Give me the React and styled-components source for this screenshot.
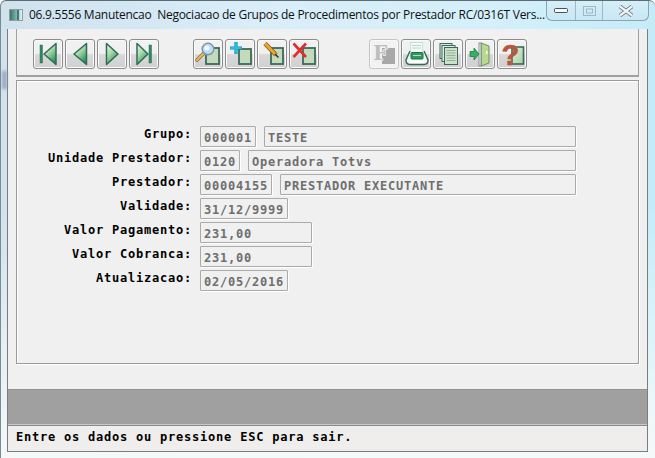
import React from 'react'
import styled, { createGlobalStyle } from 'styled-components'

const fields = [
  { label: 'Grupo:', values: [{ text: '000001', width: 56 }, { text: 'TESTE', width: 312 }] },
  { label: 'Unidade Prestador:', values: [{ text: '0120', width: 40 }, { text: 'Operadora Totvs', width: 328 }] },
  { label: 'Prestador:', values: [{ text: '00004155', width: 72 }, { text: 'PRESTADOR EXECUTANTE', width: 296 }] },
  { label: 'Validade:', values: [{ text: '31/12/9999', width: 88 }] },
  { label: 'Valor Pagamento:', values: [{ text: '231,00', width: 112 }] },
  { label: 'Valor Cobranca:', values: [{ text: '231,00', width: 112 }] },
  { label: 'Atualizacao:', values: [{ text: '02/05/2016', width: 88 }] },
]

function Sheet({ x = 13, y = 9, w = 13, h = 16 }) {
  return <rect x={x} y={y} width={w} height={h} fill="#c4dbbb" stroke="#3b6a58" strokeWidth="1.8" />
}

function Icon({ children }) {
  return (
    <svg width="28" height="28" viewBox="1 1 28 28" style={{ display: 'block', overflow: 'visible' }}>
      {children}
    </svg>
  )
}

const tri = { fill: 'url(#navGrad)', stroke: '#2f6b56', strokeWidth: 1.5, strokeLinejoin: 'round' }

const icons = {
  first: (
    <>
      <rect x="7" y="6" width="2.5" height="18" fill="#2f8a5f" stroke="#2f6b56" strokeWidth="0.5" />
      <path d="M11 15 L23 4.5 L23 25.5 Z" {...tri} />
    </>
  ),
  prev: <path d="M9 15 L21.5 4.5 L21.5 25.5 Z" {...tri} />,
  next: <path d="M21 15 L9.5 4.5 L9.5 25.5 Z" {...tri} />,
  last: (
    <>
      <path d="M19 15 L8 4.5 L8 25.5 Z" {...tri} />
      <rect x="20" y="6" width="2.5" height="18" fill="#2f8a5f" stroke="#2f6b56" strokeWidth="0.5" />
    </>
  ),
  search: (
    <>
      <Sheet x={13} y={9} w={13} h={16} />
      <path d="M10.5 14.5 L4 21" stroke="#8a6a3a" strokeWidth="3.6" strokeLinecap="round" />
      <path d="M10.5 14.5 L4 21" stroke="#f0b860" strokeWidth="2" strokeLinecap="round" />
      <circle cx="15" cy="10" r="5.8" fill="#bcdcf4" stroke="#7c93a8" strokeWidth="1.4" />
      <circle cx="14" cy="9" r="2.6" fill="#eef8ff" />
    </>
  ),
  add: (
    <>
      <Sheet x={14} y={10} w={12} h={15} />
      <path d="M11 3 V15 M5 9 H17" stroke="#1590b0" strokeWidth="3.2" />
      <path d="M11 3.5 V14.5 M5.5 9 H16.5" stroke="#20c0e8" strokeWidth="1.8" />
    </>
  ),
  edit: (
    <>
      <Sheet x={14} y={9} w={12} h={16} />
      <path d="M8 4.5 L19 16" stroke="#7a5a20" strokeWidth="4.4" />
      <path d="M8 4.5 L19 16" stroke="#f0a828" strokeWidth="2.8" />
      <path d="M18 15 L21.5 18.5" stroke="#333" strokeWidth="1.6" />
    </>
  ),
  remove: (
    <>
      <Sheet x={14} y={9} w={12} h={16} />
      <path d="M4.5 4.5 L17 18 M17 4.5 L4.5 18" stroke="#e02c2c" strokeWidth="2.6" />
    </>
  ),
  filter: (
    <>
      <rect x="13" y="9" width="13" height="16" fill="#a8a8a8" />
      <text
        x="4.5"
        y="21"
        fontFamily="'Liberation Serif', serif"
        fontWeight="700"
        fontSize="24"
        fill="#bdbdbd"
        stroke="#f2f2f2"
        strokeWidth="1.5"
        paintOrder="stroke"
      >
        F
      </text>
    </>
  ),
  print: (
    <>
      <rect x="9.5" y="3.5" width="12" height="11" fill="#f4fbf6" stroke="#bfe4d8" />
      <path d="M11 6.5 H20 M11 9 H20" stroke="#b6d8cc" />
      <path d="M9 12 L5 21 Q5 25.5 9 25.5 H23 Q27 25.5 27 21 L23 12" fill="#f2f6f2" stroke="#2f6b56" strokeWidth="1.4" />
      <rect x="10" y="13.5" width="12" height="6.5" rx="1" fill="#2f9a5e" stroke="#1f6f48" />
      <path d="M12 16.5 H20" stroke="#a8e0c0" />
      <rect x="9" y="21.5" width="14" height="2.5" fill="#fff" />
    </>
  ),
  pages: (
    <>
      <rect x="7" y="4.5" width="12" height="15" fill="#dfe6df" stroke="#3b6a58" />
      <rect x="9" y="6.5" width="13" height="16" fill="#e4ece2" stroke="#3b6a58" />
      <rect x="11.5" y="8.5" width="13" height="17" fill="#cfe0c8" stroke="#3b6a58" />
      <path d="M13.5 11.5 H22.5 M13.5 14 H22.5 M13.5 16.5 H22.5 M13.5 19 H22.5 M13.5 21.5 H22.5" stroke="#8fb39a" />
    </>
  ),
  exit: (
    <>
      <path d="M16 4 L24 7 V24 L16 27 Z" fill="#b9d98c" stroke="#6f8f6a" />
      <rect x="21" y="12" width="1.5" height="3" fill="#fff" />
      <rect x="14" y="4" width="2" height="23" fill="#eef2f4" stroke="#5f6f78" strokeWidth="0.7" />
      <path d="M5 12.5 H9 V9 L14 15 L9 21 V17.5 H5 Z" fill="#34b060" stroke="#1f7a48" strokeWidth="0.8" />
    </>
  ),
  help: (
    <>
      <rect x="15" y="8" width="11.5" height="17" fill="url(#helpGrad)" stroke="#3b6a58" strokeWidth="1.6" />
      <text
        x="4.5"
        y="26"
        fontFamily="'Liberation Sans', sans-serif"
        fontWeight="700"
        fontSize="29"
        fill="#b4583c"
        stroke="#b4583c"
        strokeWidth="0.6"
      >
        ?
      </text>
    </>
  ),
}

const toolbarGroups = [
  ['first', 'prev', 'next', 'last'],
  ['search', 'add', 'edit', 'remove'],
  ['filter', 'print', 'pages', 'exit', 'help'],
]

export default function App() {
  return (
    <>
      <GlobalStyle />
      <Window>
        <TitleBar>
          <AppIcon>
            <svg width="14" height="12" viewBox="0 0 14 12">
              <defs>
                <linearGradient id="appGrad" x1="0" x2="1" y1="0" y2="0">
                  <stop offset="0" stopColor="#2f6f6a" />
                  <stop offset="0.55" stopColor="#7fb8a8" />
                  <stop offset="1" stopColor="#f4f8f8" />
                </linearGradient>
              </defs>
              <rect x="0.5" y="0.5" width="13" height="11" fill="url(#appGrad)" stroke="#9a9a9a" />
              <rect x="8" y="1" width="2" height="10" fill="#24506a" opacity="0.7" />
            </svg>
          </AppIcon>
          <TitleText>06.9.5556 Manutencao  Negociacao de Grupos de Procedimentos por Prestador RC/0316T Vers...</TitleText>
          <CaptionButtons>
            <CaptionButton $width={28}>
              <svg width="14" height="5" viewBox="0 0 14 5">
                <rect x="0.5" y="0.5" width="13" height="4" rx="1" fill="#f8f8f8" stroke="#44505a" />
              </svg>
            </CaptionButton>
            <CaptionButton $width={26} $divider>
              <svg width="13" height="10" viewBox="0 0 13 10">
                <rect x="0.5" y="0.5" width="12" height="9" fill="none" stroke="#9fb8c4" />
                <rect x="3.5" y="3" width="6" height="4" fill="none" stroke="#9fb8c4" />
              </svg>
            </CaptionButton>
            <CaptionButton $width={45} $divider>
              <svg width="18" height="12" viewBox="0 0 18 12">
                <path d="M3 1.5 L15 10.5 M15 1.5 L3 10.5" stroke="#66727a" strokeWidth="4" />
                <path d="M3 1.5 L15 10.5 M15 1.5 L3 10.5" stroke="#f2f4f6" strokeWidth="2.2" />
              </svg>
            </CaptionButton>
          </CaptionButtons>
        </TitleBar>
        <GlassStreak />
        <Client>
          <svg width="0" height="0" style={{ position: 'absolute' }}>
            <defs>
              <linearGradient id="navGrad" x1="0" x2="0.6" y1="0" y2="1">
                <stop offset="0" stopColor="#eef8ee" />
                <stop offset="0.5" stopColor="#a8d8a8" />
                <stop offset="1" stopColor="#2f9060" />
              </linearGradient>
              <linearGradient id="helpGrad" x1="0" x2="1" y1="0" y2="1">
                <stop offset="0" stopColor="#e4f0dc" />
                <stop offset="1" stopColor="#a8cfa0" />
              </linearGradient>
            </defs>
          </svg>
          <Toolbar>
            {toolbarGroups.map((group, i) => (
              <ToolGroup key={i}>
                {group.map((name) => (
                  <ToolButton key={name} $disabled={name === 'filter'}>
                    <Icon>{icons[name]}</Icon>
                  </ToolButton>
                ))}
              </ToolGroup>
            ))}
          </Toolbar>
          <Panel>
            {fields.map((row) => (
              <FormRow key={row.label}>
                <Label>{row.label}</Label>
                {row.values.map((v) => (
                  <Field key={v.text} $width={v.width}>{v.text}</Field>
                ))}
              </FormRow>
            ))}
          </Panel>
          <GrayBar />
          <StatusBar>Entre os dados ou pressione ESC para sair.</StatusBar>
        </Client>
      </Window>
    </>
  )
}

const GlobalStyle = createGlobalStyle`
  html, body {
    margin: 0;
    padding: 0;
    background: #ffffff;
  }
`

const Window = styled.div`
  position: relative;
  box-sizing: border-box;
  width: 655px;
  height: 458px;
  overflow: hidden;
  border-top: 1px solid #5c6b72;
  border-left: 1px solid #7a8a92;
  border-radius: 6px 6px 0 0;
  background:
    linear-gradient(180deg, rgba(255, 255, 255, 0) 45%, rgba(248, 250, 250, 0.95) 100%),
    linear-gradient(90deg, #cfe2ee 0, #d9eef8 40%, #d4f0fa 75%, #c4ecf8 100%);
  display: flex;
  flex-direction: column;
`

const GlassStreak = styled.div`
  position: absolute;
  left: 1px;
  top: 70px;
  width: 5px;
  height: 18px;
  background: #8d9cc0;
  filter: blur(1.5px);
  opacity: 0.8;
`

const TitleBar = styled.div`
  height: 28px;
  padding-left: 8px;
  display: flex;
  align-items: flex-start;
`

const AppIcon = styled.div`
  margin-top: 8px;
  width: 14px;
  height: 12px;
  svg {
    display: block;
  }
`

const TitleText = styled.div`
  margin-top: 5px;
  margin-left: 6px;
  width: 514px;
  font-family: "Open Sans", "Noto Sans", sans-serif;
  font-size: 12px;
  line-height: 18px;
  letter-spacing: -0.26px;
  color: #101010;
  white-space: pre;
`

const CaptionButtons = styled.div`
  margin-left: 3px;
  height: 19px;
  display: flex;
  border: 1px solid #8da4b0;
  border-top: none;
  border-radius: 0 0 6px 6px;
  background: linear-gradient(180deg, #d6eef8, #c8e8f4);
`

const CaptionButton = styled.div`
  width: ${(p) => p.$width}px;
  display: flex;
  align-items: center;
  justify-content: center;
  border-left: ${(p) => (p.$divider ? '1px solid #9fb8c4' : 'none')};
`

const Client = styled.div`
  box-sizing: border-box;
  width: 641px;
  height: 423px;
  margin-left: 6px;
  padding-left: 8px;
  background: #f0f0f0;
  border: 1px solid #7c7c7c;
  border-top: none;
  display: flex;
  flex-direction: column;
`

const Toolbar = styled.div`
  box-sizing: border-box;
  width: 623px;
  height: 48px;
  padding: 10px 0 0 16px;
  display: flex;
  gap: 34px;
  border: 2px solid #a0a0a0;
  border-width: 0 1px 2px 1px;
`

const ToolGroup = styled.div`
  display: flex;
  gap: 2px;
  &:last-child {
    margin-left: 16px;
  }
`

const ToolButton = styled.div`
  box-sizing: border-box;
  width: 30px;
  height: 30px;
  border: 1px solid ${(p) => (p.$disabled ? '#c4c4c4' : '#8c8c8c')};
  border-radius: 3px;
  background: ${(p) =>
    p.$disabled
      ? '#f2f2f2'
      : 'linear-gradient(180deg, #f2f2f2 0, #efefef 50%, #d8d8d8 52%, #d0d0d0 100%)'};
  box-shadow: inset 0 0 0 1px #fafafa;
`

const Panel = styled.div`
  box-sizing: border-box;
  width: 623px;
  height: 286px;
  margin-top: 3px;
  padding-top: 45px;
  border: 1px solid #9a9a9a;
  box-shadow: inset 1px 1px 0 #ffffff, 1px 1px 0 #ffffff;
  display: flex;
  flex-direction: column;
  gap: 3px;
`

const FormRow = styled.div`
  height: 21px;
  display: flex;
  gap: 8px;
`

const Label = styled.div`
  width: 175px;
  font-family: "DejaVu Sans Mono", monospace;
  font-size: 12px;
  font-weight: 700;
  letter-spacing: 0.78px;
  line-height: 17px;
  text-align: right;
  color: #000000;
  white-space: pre;
`

const Field = styled.div`
  box-sizing: border-box;
  width: ${(p) => p.$width}px;
  height: 21px;
  padding: 3px 0 0 3px;
  border: 1px solid #ababab;
  box-shadow: 1px 1px 0 #ffffff;
  border-radius: 1px;
  font-family: "DejaVu Sans Mono", monospace;
  font-size: 12px;
  font-weight: 700;
  letter-spacing: 0.78px;
  line-height: 17px;
  color: #6e6e6e;
  white-space: pre;
`

const GrayBar = styled.div`
  box-sizing: border-box;
  flex: none;
  width: 639px;
  height: 36px;
  margin: 25px 0 0 -8px;
  background: #a0a0a0;
  border-top: 1px solid #909098;
  border-bottom: 1px solid #c8c8c8;
`

const StatusBar = styled.div`
  box-sizing: border-box;
  flex: none;
  width: 639px;
  height: 26px;
  margin-left: -8px;
  padding: 3px 0 0 8px;
  border-top: 1px solid #8a8a8a;
  background: #f0eded;
  font-family: "DejaVu Sans Mono", monospace;
  font-size: 12px;
  font-weight: 700;
  letter-spacing: 0.78px;
  line-height: 17px;
  color: #000000;
  white-space: pre;
`
